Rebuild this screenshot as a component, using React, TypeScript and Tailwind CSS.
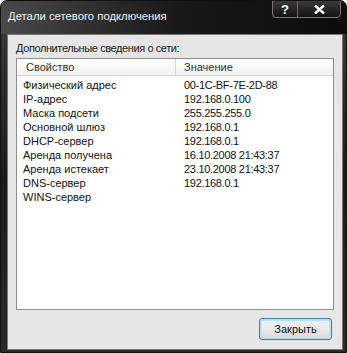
import React from 'react';

const rows: [string, string][] = [
  ['Физический адрес', '00-1C-BF-7E-2D-88'],
  ['IP-адрес', '192.168.0.100'],
  ['Маска подсети', '255.255.255.0'],
  ['Основной шлюз', '192.168.0.1'],
  ['DHCP-сервер', '192.168.0.1'],
  ['Аренда получена', '16.10.2008 21:43:37'],
  ['Аренда истекает', '23.10.2008 21:43:37'],
  ['DNS-сервер', '192.168.0.1'],
  ['WINS-сервер', ''],
];

export default function App() {
  return (
    <div className="w-[347px] h-[353px] bg-white" style={{ fontFamily: '"Liberation Sans", Arial, sans-serif' }}>
      <div className="w-full h-full flex flex-col rounded-t-[7px] bg-gradient-to-b from-[#3c3c3c] via-[#1c1c1c] to-[#2a2a2a] border border-[#111] overflow-hidden">
        {/* Title bar */}
        <div className="h-[33px] shrink-0 flex items-start justify-between bg-gradient-to-r from-[#4a4a4a] via-[#1a1a1a] to-[#0c0c0c]">
          <span className="pl-[7px] pt-[10px] text-[11.3px] text-[#f2f2f2] leading-none">Детали сетевого подключения</span>
          <div className="mr-[5px] -mt-px flex h-[18px] rounded-b-[4px] border border-[#7a7a7a] bg-gradient-to-b from-[#3a3a3a] to-[#121212] overflow-hidden">
            <div className="w-[25px] flex items-center justify-center border-r border-[#6a6a6a] text-white font-bold text-[13px] leading-none">?</div>
            <div className="w-[42px] flex items-center justify-center">
              <svg width="11" height="9" viewBox="0 0 11 9">
                <path d="M1 0.5 L10 8.5 M10 0.5 L1 8.5" stroke="white" strokeWidth="2.4" />
              </svg>
            </div>
          </div>
        </div>
        {/* Client area */}
        <div className="flex-1 mb-[2px] mr-[3px] ml-[6px] bg-[#e6e6e6] border border-[#777] flex flex-col px-[8px] pt-[6px]">
          <div className="text-[11px] tracking-[-0.4px] text-[#1a1a1a] leading-[14px]">Дополнительные сведения о сети:</div>
          <div className="mt-[3px] h-[252px] bg-white border border-[#8e8e8e] flex flex-col">
            <div className="h-[17px] flex bg-gradient-to-b from-white to-[#f1f1f1] border-b border-[#d5d5d5] text-[11px] text-[#333]">
              <div className="w-[159px] pl-[9px] flex items-center border-r border-[#d5d5d5]">Свойство</div>
              <div className="flex-1 pl-[8px] flex items-center">Значение</div>
            </div>
            <div className="pt-[2px]">
              {rows.map(([k, v]) => (
                <div key={k} className="h-[14px] flex text-[11px] leading-[14px] text-[#111]">
                  <div className="w-[160px] pl-[6px]">{k}</div>
                  <div className="flex-1 pl-[7px] tracking-[-0.3px]">{v}</div>
                </div>
              ))}
            </div>
          </div>
          <div className="flex justify-end mt-[8px] pr-[2px]">
            <button className="w-[73px] h-[22px] rounded-[3px] border border-[#3c7fb1] bg-gradient-to-b from-[#f2f2f2] via-[#ebebeb] to-[#d6d6d6] shadow-[inset_0_0_0_2px_#b5e3f5] text-[11px] text-[#111]">
              Закрыть
            </button>
          </div>
        </div>
      </div>
    </div>
  );
}
